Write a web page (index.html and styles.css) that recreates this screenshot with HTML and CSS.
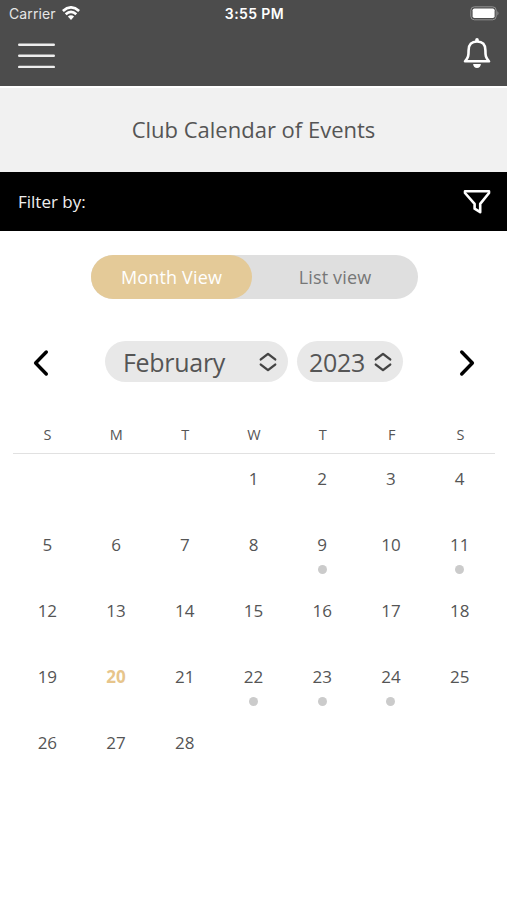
FILE: index.html
```html
<!DOCTYPE html>
<html lang="en">
<head>
<meta charset="utf-8">
<title>Club Calendar of Events</title>
<link rel="stylesheet" href="styles.css">
</head>
<body>
<header class="top">
  <div class="status">
    <div class="carrier"><span>Carrier</span>
      <svg width="18" height="14" viewBox="0 0 18 14" fill="none" stroke="#fff" stroke-width="2.7"><path d="M.9 5Q9-2.2 17.1 5"/><path d="M3.7 8.3Q9 3.6 14.3 8.3"/><path d="M5.9 10.6Q9 7.8 12.1 10.6L9 13.9Z" fill="#fff" stroke="none"/></svg>
    </div>
    <div class="clock">3:55 PM</div>
    <svg class="battery" width="30" height="15" viewBox="0 0 30 15"><rect x=".8" y=".8" width="25.4" height="13" rx="3.6" fill="none" stroke="#929292"/><rect x="2.6" y="2.5" width="22" height="9.6" rx="1.8" fill="#fff"/><path d="M27.4 5Q29.6 7.3 27.4 9.6Z" fill="#929292"/></svg>
  </div>
  <div class="nav">
    <svg width="38" height="28" viewBox="0 0 38 28" stroke="#eee" stroke-width="2.4" stroke-linecap="round"><path d="M1.2 2.7H35.8M1.2 13.8H35.8M1.2 24.9H35.8"/></svg>
    <svg class="bell" width="28" height="32" viewBox="0 0 28 32"><path d="M2 24.3C5.4 20.9 5.6 18.5 5.6 13.2C5.6 7.4 8.7 4.5 14 4.5S22.4 7.4 22.4 13.2C22.4 18.5 22.6 20.9 26 24.3Z" fill="none" stroke="#fff" stroke-width="2.6" stroke-linejoin="round"/><path d="M12.2 4.4V2.7a1.8 1.8 0 0 1 3.6 0V4.4ZM10.1 27H17.9Q17.4 31 14 31T10.1 27Z" fill="#fff"/></svg>
  </div>
</header>
<h1 class="title">Club Calendar of Events</h1>
<div class="filter"><span>Filter by:</span>
  <svg width="28" height="26" viewBox="0 0 28 26" fill="none" stroke="#fff" stroke-width="2.6" stroke-linejoin="round"><path d="M2 2.2H26V4L17.2 14.9V23.2L11.6 19.7V14.9L2 4Z"/></svg>
</div>
<main>
  <div class="toggle"><span class="tab active">Month View</span><span class="tab">List view</span></div>
  <div class="picker">
    <svg class="prev" width="16" height="28" viewBox="0 0 16 28"><path d="M13.3 3L2.6 14L13.3 25"/></svg>
    <div class="select month"><span>February</span><svg width="18" height="20" viewBox="0 0 18 20"><path d="M1.8 7.4L9 1.9L16.2 7.4M1.8 12.6L9 18.1L16.2 12.6"/></svg></div>
    <div class="select year"><span>2023</span><svg width="18" height="20" viewBox="0 0 18 20"><path d="M1.8 7.4L9 1.9L16.2 7.4M1.8 12.6L9 18.1L16.2 12.6"/></svg></div>
    <svg class="next" width="16" height="28" viewBox="0 0 16 28"><path d="M2.7 3L13.4 14L2.7 25"/></svg>
  </div>
  <div class="week"><span>S</span><span>M</span><span>T</span><span>W</span><span>T</span><span>F</span><span>S</span></div>
  <div class="days">
    <div class="day first">1</div><div class="day">2</div><div class="day">3</div><div class="day">4</div>
    <div class="day">5</div><div class="day">6</div><div class="day">7</div><div class="day">8</div><div class="day event">9</div><div class="day">10</div><div class="day event">11</div>
    <div class="day">12</div><div class="day">13</div><div class="day">14</div><div class="day">15</div><div class="day">16</div><div class="day">17</div><div class="day">18</div>
    <div class="day">19</div><div class="day today">20</div><div class="day">21</div><div class="day event">22</div><div class="day event">23</div><div class="day event">24</div><div class="day">25</div>
    <div class="day">26</div><div class="day">27</div><div class="day">28</div>
  </div>
</main>
</body>
</html>
```
FILE: styles.css
```css
* { box-sizing: border-box; }
body { margin: 0; background: #fff; color: #555; font-family: "Open Sans", sans-serif; }
svg { display: block; flex: none; }
.top { height: 86px; background: #4c4c4c; }
.status { height: 28px; padding: 0 7px 0 9px; display: grid; grid-template-columns: 1fr auto 1fr; align-items: center; color: #fff; font-family: Inter, sans-serif; font-size: 14px; line-height: 20px; }
.carrier { display: flex; align-items: center; gap: 6px; color: #e6e6e6; letter-spacing: .1px; }
.carrier svg { margin-top: -2px; }
.clock { font-weight: 600; letter-spacing: .4px; }
.battery { justify-self: end; margin-top: -2px; }
.nav { height: 58px; padding: 9px 16px 0 18px; display: flex; justify-content: space-between; }
.nav svg:first-child { margin-top: 5px; }
.title { margin: 2px 0 0; height: 84px; background: #f1f1f1; text-align: center; font-size: 22px; font-weight: 400; line-height: 82px; }
.filter { height: 59px; padding: 0 16px 0 18px; background: #000; color: #eee; display: flex; align-items: center; justify-content: space-between; font-size: 17px; }
.toggle { width: 327px; height: 44px; margin: 24px 0 0 91px; border-radius: 22px; background: #dfdfdf; display: flex; color: #777; font-size: 18px; letter-spacing: .15px; line-height: 44px; text-align: center; }
.tab { flex: 1; }
.active { flex: 0 0 161px; border-radius: 22px; background: #e4ca98; color: #fff; }
.picker { height: 41px; margin: 42px 32px 0 33px; display: flex; align-items: center; }
.prev, .next { position: relative; top: 1px; fill: none; stroke: #000; stroke-width: 3.4; stroke-linecap: round; stroke-linejoin: round; }
.next { margin-left: auto; }
.select { height: 41px; border-radius: 21px; background: #e8e8e8; display: flex; align-items: center; justify-content: space-between; font-size: 25px; letter-spacing: -.3px; line-height: 42px; }
.select svg { fill: none; stroke: #444; stroke-width: 2.4; stroke-linecap: round; stroke-linejoin: round; }
.month { width: 183px; margin-left: 56px; padding: 0 11px 0 18px; }
.year { width: 106px; margin-left: 9px; padding: 0 11px 0 12px; }
.week, .days { display: grid; grid-template-columns: repeat(7, 1fr); text-align: center; }
.week { height: 40px; margin: 32px 12px 0 13px; border-bottom: 1px solid #e1e1e1; font-size: 14.5px; line-height: 41px; }
.days { margin: 0 13px; grid-auto-rows: 66px; font-size: 17px; line-height: 24px; padding-top: 13px; }
.day.first { grid-column: 4; }
.event::after { content: ""; display: block; width: 9px; height: 9px; margin: 8px auto 0; border-radius: 50%; background: #cbcbcb; }
.today { color: #e7c58b; font-weight: 700; }
```
